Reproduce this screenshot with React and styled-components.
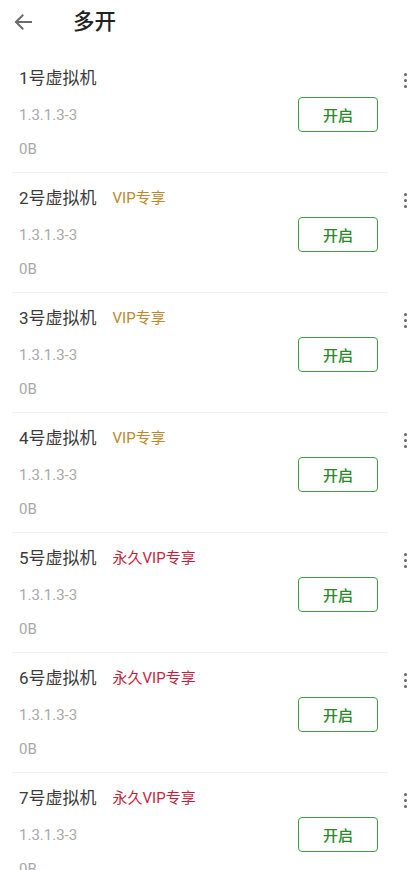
import React from "react";
import styled, { createGlobalStyle } from "styled-components";

const GlobalStyle = createGlobalStyle`
  html, body {
    margin: 0;
    padding: 0;
    background: #fff;
    overflow: hidden;
  }
  body {
    font-family: Roboto, "Noto Sans CJK SC", sans-serif;
  }
`;

const machines = [
  { id: 1, badge: null },
  { id: 2, badge: "vip" },
  { id: 3, badge: "vip" },
  { id: 4, badge: "vip" },
  { id: 5, badge: "forever" },
  { id: 6, badge: "forever" },
  { id: 7, badge: "forever" },
];

const App = () => {
  return (
    <>
      <GlobalStyle />
      <Page>
        <Header>
          <BackButton>
            <svg width="20" height="20" viewBox="0 0 20 20" fill="none">
              <path
                d="M18 10H3M9.5 3.5L3 10l6.5 6.5"
                stroke="#6b6b6b"
                strokeWidth="2"
                strokeLinecap="square"
              />
            </svg>
          </BackButton>
          <Title>多开</Title>
        </Header>
        <List>
          {machines.map((m) => (
            <Item key={m.id}>
              <Card>
                <Info>
                  <NameRow>
                    <Name>{m.id}号虚拟机</Name>
                    {m.badge === "vip" && <Badge tone="vip">VIP专享</Badge>}
                    {m.badge === "forever" && (
                      <Badge tone="forever">永久VIP专享</Badge>
                    )}
                  </NameRow>
                  <Meta>1.3.1.3-3</Meta>
                  <Size>0B</Size>
                </Info>
                <OpenButton>开启</OpenButton>
              </Card>
              <More>
                <Dot />
                <Dot />
                <Dot />
              </More>
            </Item>
          ))}
        </List>
      </Page>
    </>
  );
};

export default App;

const Page = styled.div`
  width: 419px;
  height: 870px;
  overflow: hidden;
`;

const Header = styled.div`
  height: 53px;
  display: flex;
  align-items: flex-start;
  padding-top: 12px;
  box-sizing: border-box;
`;

const BackButton = styled.div`
  width: 20px;
  height: 20px;
  margin-left: 13px;
  display: flex;
  align-items: center;
  justify-content: center;
`;

const Title = styled.h1`
  margin: -3px 0 0 40px;
  font-size: 21.5px;
  line-height: 26px;
  font-weight: 500;
  color: #222;
`;

const List = styled.div`
  display: flex;
  flex-direction: column;
`;

const Item = styled.div`
  display: flex;
  align-items: flex-start;
`;

const Card = styled.div`
  width: 376px;
  margin-left: 12px;
  box-sizing: border-box;
  padding: 13px 10px 12px 7px;
  border-bottom: 1px solid #efefef;
  display: flex;
  align-items: center;
  justify-content: space-between;
`;

const Info = styled.div`
  display: flex;
  flex-direction: column;
`;

const NameRow = styled.div`
  display: flex;
  align-items: center;
  height: 24px;
`;

const Name = styled.span`
  font-size: 17px;
  color: #3a3a3a;
  line-height: 24px;
`;

const Badge = styled.span`
  margin-left: 16px;
  font-size: 15px;
  line-height: 24px;
  color: ${(p) => (p.tone === "vip" ? "#c0872c" : "#c81e3f")};
`;

const Meta = styled.span`
  margin-top: 14px;
  font-size: 15px;
  line-height: 22px;
  color: #a8a8a8;
`;

const Size = styled(Meta)`
  margin-top: 12px;
`;

const OpenButton = styled.button`
  width: 80px;
  height: 35px;
  margin-top: 3px;
  border: 1.5px solid #3e9e3e;
  border-radius: 4px;
  background: #fff;
  color: #2a8a2a;
  font-family: "Noto Sans CJK SC", sans-serif;
  font-size: 15px;
  font-weight: 500;
  padding: 0;
`;

const More = styled.div`
  margin: 20px 0 0 16px;
  display: flex;
  flex-direction: column;
  gap: 3px;
`;

const Dot = styled.span`
  width: 3px;
  height: 3px;
  border-radius: 50%;
  background: #666;
`;
